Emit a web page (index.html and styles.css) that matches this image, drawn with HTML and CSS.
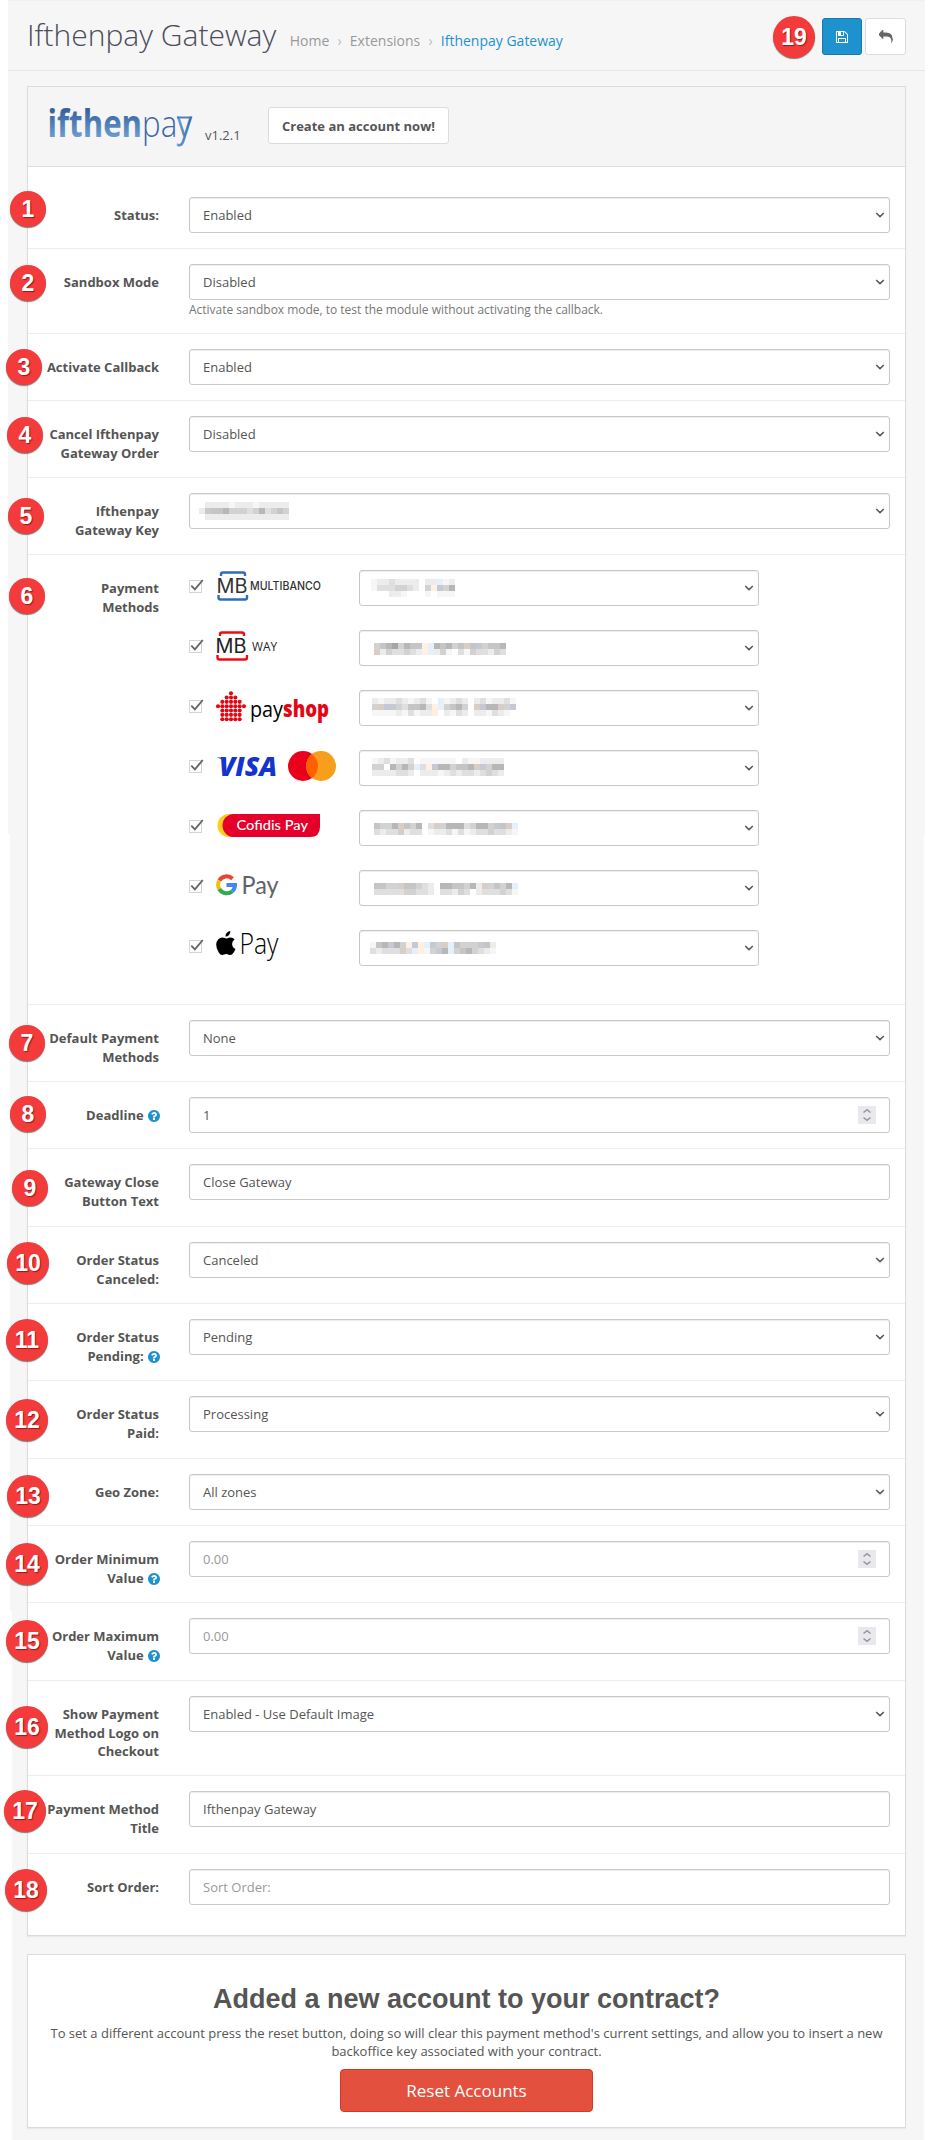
FILE: index.html
```html
<!DOCTYPE html>
<html lang="en">
<head>
<meta charset="utf-8">
<title>Ifthenpay Gateway</title>
<link rel="stylesheet" href="styles.css">
</head>
<body>
<svg class="defs" width="0" height="0" aria-hidden="true">
  <symbol id="chevron" viewBox="0 0 10 6"><path d="M1.200 1l3.800 3.600L8.800 1" fill="none" stroke="#555" stroke-width="1.500"/></symbol>
  <symbol id="spin" viewBox="0 0 18 18"><path d="M5.500 6.500L9 3.600l3.500 2.900M5.500 11.500L9 14.400l3.500-2.900" fill="none" stroke="#9494a0" stroke-width="1.500"/></symbol>
  <symbol id="check" viewBox="0 0 16 16"><rect x="0.500" y="2.500" width="12" height="12" fill="#fff" stroke="#d4d4d4"/><path d="M2.300 7.700L5.900 11.300 13.800 2" fill="none" stroke="#666" stroke-width="1.900"/></symbol>
  <symbol id="help" viewBox="0 0 1792 1792"><path d="M1024 1376v-192q0-14-9-23t-23-9h-192q-14 0-23 9t-9 23v192q0 14 9 23t23 9h192q14 0 23-9t9-23zM1280 704q0-88-55.500-163t-138.500-116-170-41q-243 0-371 213-15 24 8 42l132 100q7 6 19 6 16 0 25-12 53-68 86-92 34-24 86-24 48 0 85.500 26t37.500 59q0 38-20 61t-68 45q-63 28-115.500 86.500t-52.500 125.500v36q0 14 9 23t23 9h192q14 0 23-9t9-23q0-19 21.500-49.500t54.500-49.500q32-18 49-28.500t46-35 44.500-48 28-60.500 12.500-81zM1664 896q0 209-103 385.500t-279.500 279.500-385.500 103-385.500-103-279.500-279.500-103-385.500 103-385.500 279.500-279.500 385.500-103 385.500 103 279.500 279.500 103 385.500z" fill="#1e91cf"/></symbol>
</svg>
<div class="page">
  <header class="topbar">
    <h1>Ifthenpay Gateway</h1>
    <nav class="crumbs"><span>Home</span><i>›</i><span>Extensions</span><i>›</i><span class="active">Ifthenpay Gateway</span></nav>
    <div class="actions">
      <button class="btn btn-save" type="button" aria-label="Save"><svg width="14" height="14" viewBox="0 0 1792 1792"><path fill="#fff" d="M512 1536h768v-384h-768v384zM1408 1536h128v-896q0-14-10-38.500t-20-34.500l-281-281q-10-10-34-20t-39-10v416q0 40-28 68t-68 28h-576q-40 0-68-28t-28-68v-416h-128v1280h128v-416q0-40 28-68t68-28h832q40 0 68 28t28 68v416zM1024 608v-320q0-13-9.500-22.500t-22.500-9.500h-192q-13 0-22.500 9.500t-9.500 22.500v320q0 13 9.500 22.500t22.500 9.500h192q13 0 22.500-9.500t9.500-22.500zM1664 640v928q0 40-28 68t-68 28h-1344q-40 0-68-28t-28-68v-1344q0-40 28-68t68-28h928q40 0 88 20t76 48l280 280q28 28 48 76t20 88z"/></svg></button>
      <button class="btn btn-back" type="button" aria-label="Back"><svg width="14" height="14" viewBox="0 0 1792 1792"><path fill="#666" d="M1792 1120q0 166-127 451-3 7-10.500 24t-13.500 30-13 22q-12 17-28 17-15 0-23.500-10t-8.500-25q0-9 2.500-26.500t2.500-23.500q5-68 5-123 0-112-19.500-200.500t-54-153.500-89-112-112.500-79-129-50.500-137.500-29-131.500-13-128-2h-224v256q0 26-19 45t-45 19-45-19l-512-512q-19-19-19-45t19-45l512-512q19-19 45-19t45 19 19 45v256h224q713 0 875 403 53 134 53 333z"/></svg></button>
    </div>
  </header>

  <main class="content">
    <section class="panel">
      <div class="panel-heading">
        <svg class="logo" width="148" height="42" viewBox="0 0 148 42">
          <defs><linearGradient id="lg" x1="0" y1="4" x2="0" y2="33" gradientUnits="userSpaceOnUse"><stop offset="0" stop-color="#355f9e"/><stop offset="1" stop-color="#6c9fd0"/></linearGradient>
          <linearGradient id="lg2" x1="128" y1="0" x2="146" y2="0" gradientUnits="userSpaceOnUse"><stop offset="0" stop-color="#6fa8dc"/><stop offset="1" stop-color="#2f5a9a"/></linearGradient></defs>
          <text y="31.500" textLength="144" lengthAdjust="spacingAndGlyphs"><tspan x="0.500" class="logo-bold" fill="url(#lg)">ifthen</tspan><tspan class="logo-light" fill="#3c68a8">pa</tspan><tspan class="logo-light" fill="url(#lg2)" stroke="url(#lg2)">y</tspan></text>
          <path d="M130 12.500h14" stroke="#4c82bf" stroke-width="2"/>
        </svg>
        <span class="version">v1.2.1</span>
        <button class="btn btn-account" type="button">Create an account now!</button>
      </div>
      <div class="panel-body">
        <div class="row first"><label>Status:</label><div class="control"><div class="field"><span>Enabled</span><svg class="chev"><use href="#chevron"/></svg></div></div></div>
        <div class="row"><label>Sandbox Mode</label><div class="control"><div class="field"><span>Disabled</span><svg class="chev"><use href="#chevron"/></svg></div><p class="hint">Activate sandbox mode, to test the module without activating the callback.</p></div></div>
        <div class="row"><label>Activate Callback</label><div class="control"><div class="field"><span>Enabled</span><svg class="chev"><use href="#chevron"/></svg></div></div></div>
        <div class="row"><label>Cancel Ifthenpay Gateway Order</label><div class="control"><div class="field"><span>Disabled</span><svg class="chev"><use href="#chevron"/></svg></div></div></div>
        <div class="row"><label>Ifthenpay Gateway Key</label><div class="control"><div class="field"><svg class="mosaic key" data-mosaic="key"></svg><svg class="chev"><use href="#chevron"/></svg></div></div></div>

        <div class="row methods-row"><label>Payment Methods</label><div class="control methods">
          <div class="method"><svg class="check"><use href="#check"/></svg>
            <svg class="brand" viewBox="215 570 125 36"><g fill="none" stroke="#2c6cbc" stroke-width="2.400"><path d="M221 576v-1.500q0-2 2-2h20q2 0 2 2v1.500M218.500 595v2.500q0 2 2 2h24.500q2 0 2-2V595"/></g><text x="216.500" y="593" class="mb" fill="#333" textLength="31" lengthAdjust="spacingAndGlyphs">MB</text><text x="250" y="590.300" class="multi" fill="#333" textLength="71" lengthAdjust="spacingAndGlyphs">MULTIBANCO</text></svg>
            <div class="field"><svg class="mosaic" data-mosaic="m1"></svg><svg class="chev"><use href="#chevron"/></svg></div></div>
          <div class="method"><svg class="check"><use href="#check"/></svg>
            <svg class="brand" viewBox="215 630 125 36"><g fill="none" stroke="#f00b12" stroke-width="2.400"><path d="M220 636v-1.500q0-2 2-2h20q2 0 2 2v1.500M217.500 655v2.500q0 2 2 2h25.500q2 0 2-2V655"/></g><text x="215.500" y="653" class="mb" fill="#222" textLength="31" lengthAdjust="spacingAndGlyphs">MB</text><text x="252" y="651" class="way" fill="#222" textLength="25" lengthAdjust="spacingAndGlyphs">WAY</text></svg>
            <div class="field"><svg class="mosaic" data-mosaic="m2"></svg><svg class="chev"><use href="#chevron"/></svg></div></div>
          <div class="method"><svg class="check"><use href="#check"/></svg>
            <svg class="brand" viewBox="215 690 125 36"><g id="payshop-dots" fill="#e30613"></g><text x="250" y="716.500" class="pay" textLength="33" lengthAdjust="spacingAndGlyphs">pay</text><text x="283" y="716.500" class="shop" fill="#e30613" textLength="46" lengthAdjust="spacingAndGlyphs">shop</text></svg>
            <div class="field"><svg class="mosaic" data-mosaic="m3"></svg><svg class="chev"><use href="#chevron"/></svg></div></div>
          <div class="method"><svg class="check"><use href="#check"/></svg>
            <svg class="brand" viewBox="215 750 125 36"><path d="M216.500 757.500h8l2 3z" fill="#1434cb"/><text x="219" y="776" class="visa" fill="#1434cb" textLength="58" lengthAdjust="spacingAndGlyphs">VISA</text><circle cx="303" cy="766" r="15" fill="#eb001b"/><circle cx="321" cy="766" r="15" fill="#f79e1b"/><path d="M312 754a15 15 0 0 1 0 24a15 15 0 0 1 0-24z" fill="#ff5f00"/></svg>
            <div class="field"><svg class="mosaic" data-mosaic="m4"></svg><svg class="chev"><use href="#chevron"/></svg></div></div>
          <div class="method"><svg class="check"><use href="#check"/></svg>
            <svg class="brand" viewBox="215 810 125 36"><rect x="217.500" y="814" width="30" height="23" rx="11.500" fill="#ffcd1c"/><path d="M234 814h86v13q0 10-10 10h-76a11.500 11.500 0 0 1 0-23z" fill="#e4002b"/><text x="236.500" y="830" class="cofidis" fill="#fff" textLength="71.500" lengthAdjust="spacingAndGlyphs">Cofidis Pay</text></svg>
            <div class="field"><svg class="mosaic" data-mosaic="m5"></svg><svg class="chev"><use href="#chevron"/></svg></div></div>
          <div class="method"><svg class="check"><use href="#check"/></svg>
            <svg class="brand" viewBox="215 870 125 36"><g fill="none" stroke-width="4"><path d="M219.300 880.500A8.500 8.500 0 0 1 232.500 878.700" stroke="#ea4335"/><path d="M219.300 889A8.500 8.500 0 0 1 219.300 880.500" stroke="#fbbc04"/><path d="M232.300 891.200A8.500 8.500 0 0 1 219.300 889" stroke="#34a853"/><path d="M226.500 885H235A8.500 8.500 0 0 1 232.300 891.200" stroke="#4285f4"/></g><text x="241.500" y="894" class="gpay" fill="#5f6368" textLength="37" lengthAdjust="spacingAndGlyphs">Pay</text></svg>
            <div class="field"><svg class="mosaic" data-mosaic="m6"></svg><svg class="chev"><use href="#chevron"/></svg></div></div>
          <div class="method"><svg class="check"><use href="#check"/></svg>
            <svg class="brand" viewBox="215 930 125 36"><path d="M230.300 931q.3 2.400-1.300 4.100-1.500 1.600-3.500 1.500-.2-2.200 1.300-3.900 1.500-1.600 3.500-1.700zM234.600 939.500q-2.600 1.600-2.500 4.500.1 3.500 3.300 4.900-.6 2-1.900 3.800-1.500 2.200-3.200 2.200-1.100 0-2-.5-1-.4-2.100-.4t-2.200.5q-1 .4-1.800.4-1.900 0-3.500-2.500-2.600-3.800-2.500-7.800.2-3.400 2.100-5.400 1.700-1.700 4-1.700 1.200 0 2.400.6 1 .4 1.600.4t1.700-.5q1.400-.6 2.700-.5 2.500.1 3.900 2z"/><text x="239.500" y="954" class="apay" textLength="39" lengthAdjust="spacingAndGlyphs">Pay</text></svg>
            <div class="field"><svg class="mosaic" data-mosaic="m7"></svg><svg class="chev"><use href="#chevron"/></svg></div></div>
        </div></div>

        <div class="row"><label>Default Payment Methods</label><div class="control"><div class="field"><span>None</span><svg class="chev"><use href="#chevron"/></svg></div></div></div>
        <div class="row"><label>Deadline <svg class="help"><use href="#help"/></svg></label><div class="control"><div class="field number"><span>1</span><svg class="spin"><use href="#spin"/></svg></div></div></div>
        <div class="row tall"><label>Gateway Close Button Text</label><div class="control"><div class="field"><span>Close Gateway</span></div></div></div>
        <div class="row"><label>Order Status Canceled:</label><div class="control"><div class="field"><span>Canceled</span><svg class="chev"><use href="#chevron"/></svg></div></div></div>
        <div class="row"><label>Order Status Pending: <svg class="help"><use href="#help"/></svg></label><div class="control"><div class="field"><span>Pending</span><svg class="chev"><use href="#chevron"/></svg></div></div></div>
        <div class="row tall"><label>Order Status Paid:</label><div class="control"><div class="field"><span>Processing</span><svg class="chev"><use href="#chevron"/></svg></div></div></div>
        <div class="row"><label>Geo Zone:</label><div class="control"><div class="field"><span>All zones</span><svg class="chev"><use href="#chevron"/></svg></div></div></div>
        <div class="row"><label>Order Minimum Value <svg class="help"><use href="#help"/></svg></label><div class="control"><div class="field number"><span class="placeholder">0.00</span><svg class="spin"><use href="#spin"/></svg></div></div></div>
        <div class="row tall"><label>Order Maximum Value <svg class="help"><use href="#help"/></svg></label><div class="control"><div class="field number"><span class="placeholder">0.00</span><svg class="spin"><use href="#spin"/></svg></div></div></div>
        <div class="row triple"><label>Show Payment Method Logo on Checkout</label><div class="control"><div class="field"><span>Enabled - Use Default Image</span><svg class="chev"><use href="#chevron"/></svg></div></div></div>
        <div class="row tall"><label>Payment Method Title</label><div class="control"><div class="field"><span>Ifthenpay Gateway</span></div></div></div>
        <div class="row"><label>Sort Order:</label><div class="control"><div class="field"><span class="placeholder">Sort Order:</span></div></div></div>
      </div>
    </section>

    <section class="panel reset">
      <h2>Added a new account to your contract?</h2>
      <p>To set a different account press the reset button, doing so will clear this payment method's current settings, and allow you to insert a new backoffice key associated with your contract.</p>
      <button class="btn btn-reset" type="button">Reset Accounts</button>
    </section>
  </main>

  <div class="markers">
    <b class="n1">1</b><b class="n2">2</b><b class="n3">3</b><b class="n4">4</b><b class="n5">5</b><b class="n6">6</b><b class="n7">7</b><b class="n8">8</b><b class="n9">9</b>
    <b class="wide n10">10</b><b class="wide n11">11</b><b class="wide n12">12</b><b class="wide n13">13</b><b class="wide n14">14</b><b class="wide n15">15</b><b class="wide n16">16</b><b class="wide n17">17</b><b class="wide n18">18</b><b class="wide n19">19</b>
  </div>
</div>
<script src="script.js"></script>
</body>
</html>
```
FILE: styles.css
```css
* { box-sizing: border-box; }
body { margin: 0; background: #fff; font: 13px/18.5px "Open Sans", sans-serif; color: #555; }
.defs { position: absolute; }
.page {
  position: relative; width: 933px; height: 2140px; overflow: hidden;
  background:
    linear-gradient(#f0f0f0, #f0f0f0) 8px 0 / 917px 1px no-repeat,
    linear-gradient(#f6f6f6, #f6f6f6) 8px 0 / 917px 834px no-repeat,
    linear-gradient(#f6f6f6, #f6f6f6) 10px 834px / 914px 777px no-repeat,
    linear-gradient(#f6f6f6, #f6f6f6) 12px 1611px / 912px 529px no-repeat,
    #fff;
}
.topbar { display: flex; align-items: flex-start; height: 71px; margin: 0 8px; padding: 18px 19px 0 19px; border-bottom: 1px solid #e6e6e6; }
.topbar h1 { margin: -2px 0 0; font-size: 30px; line-height: 38px; font-weight: 300; color: #4c4d5a; white-space: nowrap; }
.crumbs { display: flex; margin: 13px 0 0 13.500px; font-size: 14px; line-height: 20px; color: #999; white-space: nowrap; }
.crumbs i { width: 20.500px; text-align: center; font-style: normal; color: #bbb; }
.crumbs .active { color: #1e91cf; }
.actions { display: flex; gap: 3px; margin-left: auto; }
.btn { display: flex; align-items: center; justify-content: center; padding: 0; border: 1px solid #dcdcdc; border-radius: 3px; background: #fff; font-family: inherit; color: #555; }
.btn-save { width: 40px; height: 37px; background: #1e91cf; border-color: #1978ab; }
.btn-back { width: 41px; height: 37px; }

.content { padding: 15px 27px 0; }
.panel { border: 1px solid #dcdcdc; background: #fff; box-shadow: 0 1px 1px rgba(0,0,0,.05); }
.panel-heading { display: flex; height: 80px; padding: 18px 0 0 19px; background: #f5f5f5; border-bottom: 1px solid #dcdcdc; }
.logo, .brand { flex: none; overflow: visible; }
.logo-bold { font: 700 37px "Open Sans", sans-serif; }
.logo-light { font: 300 37px "Open Sans", sans-serif; }
.version { margin: 21px 0 0 10px; width: 63px; }
.btn-account { width: 181px; height: 37px; margin-top: 2px; font-size: 13px; font-weight: 700; }
.panel-body { padding: 15px 0; }

.row { display: flex; padding: 15px 0; border-top: 1px solid #ededed; }
.row.first { border-top: 0; }
.row.tall { padding-bottom: 16px; }
.row.triple { padding-bottom: 14.500px; }
.row > label { width: 146px; padding: 9px 15px 0; text-align: right; font-weight: 700; }
.control { width: 731px; padding: 0 15px; }
.field { display: flex; align-items: center; justify-content: space-between; height: 36px; padding: 0 4px 0 13px; border: 1px solid #c8c8c8; border-radius: 3px; background: #fff; box-shadow: inset 0 1px 1px rgba(0,0,0,.075); }
.placeholder { color: #999; }
.chev { width: 10px; height: 6px; margin-left: auto; }
.number { padding-right: 13px; }
.spin { width: 18px; height: 18px; background: #e9e9ed; }
.help { width: 14px; height: 14px; margin: 0 -2px 0 0; vertical-align: -3px; }
.hint { margin: 1px 0 0; font-size: 12px; line-height: 17px; color: #777; letter-spacing: -0.015px; }
.mosaic { width: 132px; height: 18px; }

.methods-row { height: 450px; }
.methods { display: flex; flex-direction: column; gap: 24px; }
.method { display: flex; height: 36px; }
.check { width: 16px; height: 16px; margin: 8px 10px 0 0; }
.brand { width: 125px; height: 36px; margin-right: 19px; }
.method .field { width: 400px; padding-left: 11px; }
.mb { font: 400 19.500px Inter, sans-serif; }
.multi { font: 500 11.500px Inter, sans-serif; }
.way { font: 400 13.500px "Open Sans", sans-serif; }
.pay { font: 400 22px "Open Sans", sans-serif; }
.shop { font: 800 22px "Open Sans", sans-serif; }
.visa { font: italic 800 26px "Open Sans", sans-serif; }
.cofidis { font: 500 13.500px Lato, sans-serif; }
.gpay { font: 400 25px Lato, sans-serif; }
.apay { font: 300 29px "Open Sans", sans-serif; }

.reset { display: flex; flex-direction: column; align-items: center; height: 174px; margin-top: 18px; text-align: center; }
.reset h2 { margin: 26px 0 0; font: 700 27px/36px "Liberation Sans", Arial, sans-serif; }
.reset p { margin: 7px 15px 9px; line-height: 18px; }
.btn-reset { width: 253px; height: 43px; border-color: #dd3520; border-radius: 4px; background: #e3503e; color: #fff; font-size: 17px; }

/* numbered callouts lying over the form */
.markers b { position: absolute; width: 36px; height: 36px; margin: -18px 0 0 -18px; border-radius: 50%; background: #f43b3b; color: #fff; font: 700 23px/36px "Liberation Sans", Arial, sans-serif; text-align: center; text-shadow: 1px 1px 1px rgba(90,0,0,.6); box-shadow: 0 1px 1px rgba(70,70,70,.7); }
.markers .wide { width: 42px; height: 42px; margin: -21px 0 0 -21px; line-height: 42px; }
.n1 { left: 28px; top: 209px; } .n2 { left: 28px; top: 283px; } .n3 { left: 24px; top: 367px; }
.n4 { left: 25px; top: 435px; } .n5 { left: 26px; top: 516px; } .n6 { left: 27px; top: 596px; }
.n7 { left: 27px; top: 1043px; } .n8 { left: 28px; top: 1114px; } .n9 { left: 30px; top: 1188px; }
.n10 { left: 28px; top: 1263px; } .n11 { left: 27px; top: 1340px; } .n12 { left: 27px; top: 1420px; }
.n13 { left: 28px; top: 1496px; } .n14 { left: 27px; top: 1564px; } .n15 { left: 27px; top: 1641px; }
.n16 { left: 27px; top: 1727px; } .n17 { left: 25px; top: 1811px; } .n18 { left: 26px; top: 1890px; }
.n19 { left: 794px; top: 37px; }
```
FILE: script.js
```js
const NS = 'http://www.w3.org/2000/svg';
const tones = { a: '#f6f6f6', b: '#ececec', c: '#e0dfdf', d: '#d2d2d2', e: '#c6c5c5', f: '#b8b7b7', g: '#a9a5a5', o: '#fff0e3', p: '#e6f0fd', q: '#d9cec7', r: '#c4c9d3' };

// x and y shift the grid inside its field; each letter is one 6px cell
const mosaics = {
  key: { x: -4, y: 0, rows: ['.bbbbabbbabbbbb', 'breefdddcdfcded', '.bbbbbbbbbbbbbb'] },
  m1: { x: 0, y: 0, rows: ['abbcbbbb.bbpab', 'acccddcb.dordf', '...bba...a.aaa'] },
  m2: { x: 3, y: 4, rows: ['defgdfeeopfefdeqerdeef', 'qbdccdcbopbda.cadccbdc'] },
  m3: { x: 1, y: -1, rows: ['babbcbabca.pabcb.bcabbca', 'dqrrdceefcopdefd.qrffqdr', 'aaaabacabbo.bacb.bbacba.'] },
  m4: { x: 1, y: -1, rows: ['abcabbc.aaaaaa.baabbbb', 'dd.fdfdpcorffdeefqrdff', 'bbbbccb.bbbabcbccbcdcb'] },
  m5: { x: 3, y: 4, rows: ['eddfqedf.cqdfffcdffdreqp', 'cbccqbcc.abbcacabccdccba'] },
  m6: { x: 3, y: 4, rows: ['eeddqeedcb.ffeedfbqdedfp', 'cccccddccb.ccbdc.bcccdca'] },
  m7: { x: -1, y: 3, rows: ['aefrfdoroprdqpedddreb', 'cbcccqcpoadrfpdefdcba'] }
};

const make = (tag, attrs, parent) => {
  const el = document.createElementNS(NS, tag);
  for (const k in attrs) el.setAttribute(k, attrs[k]);
  parent.appendChild(el);
};

document.querySelectorAll('[data-mosaic]').forEach(svg => {
  const m = mosaics[svg.dataset.mosaic];
  svg.style.overflow = 'visible';
  m.rows.forEach((row, y) => [...row].forEach((c, x) => {
    if (tones[c]) make('rect', { x: m.x + x * 6, y: m.y + y * 6, width: 6, height: 6, fill: tones[c] }, svg);
  }));
});

const dots = document.getElementById('payshop-dots');
[0, 1, 2, 3, 2, 2, 2].forEach((reach, r) => {
  for (let c = -reach; c <= reach; c++) make('circle', { cx: 231 + c * 4.33, cy: 693.2 + r * 4.33, r: 2.05 }, dots);
});
```
